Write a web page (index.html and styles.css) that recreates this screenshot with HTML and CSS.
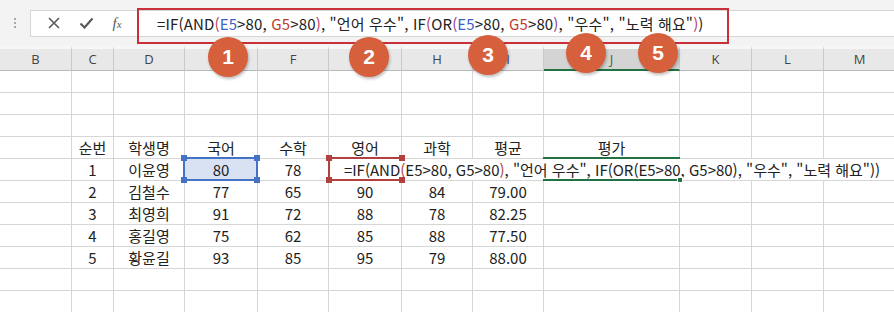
FILE: index.html
```html
<!DOCTYPE html>
<html lang="ko">

<head>
    <meta charset="UTF-8">
    <meta name="viewport" content="width=device-width, initial-scale=1.0">
    <title>IF AND OR 수식</title>
    <link rel="stylesheet" href="styles.css">
</head>

<body>
    <div class="page">
        <!-- 수식 입력줄 -->
        <div class="toolbar">
            <div class="grip"><i></i><i></i><i></i></div>
            <div class="fbar">
                <div class="fbtns">
                    <svg width="12" height="12" viewBox="0 0 12 12"><path d="M1 1L11 11M11 1L1 11" stroke="#5a5a5a" stroke-width="1.6" fill="none"/></svg>
                    <svg width="15" height="12" viewBox="0 0 15 12"><path d="M1.5 6.5L5.5 10.5L13.5 1.5" stroke="#5a5a5a" stroke-width="2.2" fill="none"/></svg>
                    <span class="fx">f<small>x</small></span>
                </div>
                <div class="finput">=IF(AND<span class="p1">(</span><span class="rb">E5</span>&gt;80, <span class="rr">G5</span>&gt;80<span class="p1">)</span>, "언어 우수", IF<span class="p1">(</span>OR<span class="p2">(</span><span class="rb">E5</span>&gt;80, <span class="rr">G5</span>&gt;80<span class="p2">)</span>, "우수", "노력 해요"<span class="p1">)</span>)</div>
            </div>
        </div>

        <!-- 시트 -->
        <div class="sheet">
            <div class="ch">B</div><div class="ch">C</div><div class="ch">D</div><div class="ch">E</div>
            <div class="ch">F</div><div class="ch">G</div><div class="ch">H</div><div class="ch">I</div>
            <div class="ch sel">J</div><div class="ch">K</div><div class="ch">L</div><div class="ch">M</div>
        </div>

        <!-- 표시 -->
        <div class="mark"></div>
        <div class="ref blue"><i class="tl"></i><i class="tr"></i><i class="bl"></i><i class="br"></i></div>
        <div class="ref red"><i class="tl"></i><i class="tr"></i><i class="bl"></i><i class="br"></i></div>
        <div class="active"><i class="br"></i></div>
        <div class="badge b1">1</div>
        <div class="badge b2">2</div>
        <div class="badge b3">3</div>
        <div class="badge b4">4</div>
        <div class="badge b5">5</div>
    </div>
    <script>
        // 표 데이터
        let rows = [
            [], [], [],
            ['', '순번', '학생명', '국어', '수학', '영어', '과학', '평균', '평가', '', '', ''],
            ['', '1', '이윤영', '80', '78'],
            ['', '2', '김철수', '77', '65', '90', '84', '79.00', '', '', '', ''],
            ['', '3', '최영희', '91', '72', '88', '78', '82.25', '', '', '', ''],
            ['', '4', '홍길영', '75', '62', '85', '88', '77.50', '', '', '', ''],
            ['', '5', '황윤길', '93', '85', '95', '79', '88.00', '', '', '', ''],
            [], []
        ];
        let formula = '=IF(AND<span class="c1">(</span>E5&gt;80, G5&gt;80<span class="c1">)</span>, "언어 우수", IF(OR(E5&gt;80, G5&gt;80), "우수", "노력 해요"))';
        function render() {
            let sheet = document.querySelector(".sheet");
            rows.forEach((row, r) => {
                for (let c = 0; c < 12; c++) {
                    let cell = document.createElement("div");
                    cell.className = "cell";
                    if (r === 4 && c === 3) cell.classList.add("hl");
                    if (r === 4 && c === 5) {
                        cell.classList.add("wide");
                        cell.innerHTML = formula;
                        sheet.appendChild(cell);
                        break;
                    }
                    cell.textContent = row[c] || "";
                    sheet.appendChild(cell);
                }
            });
        }
        render();
    </script>
</body>

</html>
```

FILE: styles.css
```css
* {
    margin: 0;
    padding: 0;
    box-sizing: border-box;
}

body {
    width: 894px;
    height: 312px;
    overflow: hidden;
    background: #fff;
    font-family: "Noto Sans CJK KR", sans-serif;
    color: #222;
}

.page {
    position: relative;
    width: 894px;
    height: 312px;
    overflow: hidden;
}

.toolbar {
    height: 46px;
    background: #f3f3f3;
    display: flex;
    align-items: center;
}

.grip {
    width: 30px;
    display: flex;
    flex-direction: column;
    align-items: center;
    gap: 2px;
}

.grip i {
    width: 2px;
    height: 2px;
    background: #a8a8a8;
}

.fbar {
    flex: 1;
    height: 27px;
    display: flex;
    background: #fff;
    border: 1px solid #d6d6d6;
    border-right: none;
}

.fbtns {
    width: 106px;
    display: flex;
    align-items: center;
    justify-content: space-around;
    padding: 0 6px 0 8px;
}

.fx {
    font-family: "Liberation Serif", serif;
    font-style: italic;
    font-size: 15px;
    color: #5a5a5a;
    line-height: 1;
}

.fx small {
    font-size: 11px;
}

.finput {
    flex: 1;
    padding-left: 20px;
    font-size: 15px;
    letter-spacing: 0.15px;
    line-height: 25px;
    white-space: nowrap;
}

.rb {
    color: #3b5fc7;
}

.rr {
    color: #c0392f;
}

.p1 {
    color: #b3406a;
}

.p2 {
    color: #8a3fa0;
}

.c1 {
    color: #b04545;
}

.sheet {
    display: grid;
    grid-template-columns: 72px 42px 71px 73px 71px 73px 71px 71px 136px 72px 72px 72px;
    grid-template-rows: 25px;
    grid-auto-rows: 22px;
}

.ch {
    background: #e8e8e8;
    border-right: 1px solid #c9c9c9;
    border-bottom: 1px solid #b9b9b9;
    border-top: 3px solid #f7f7f7;
    text-align: center;
    font-family: "Open Sans", sans-serif;
    font-size: 13px;
    line-height: 21px;
    color: #444;
}

.ch.sel {
    background: #d4d4d4;
    color: #217346;
    border-bottom: 2px solid #217346;
}

.cell {
    border-right: 1px solid #d6d6d6;
    border-bottom: 1px solid #d6d6d6;
    text-align: center;
    font-size: 15px;
    line-height: 21px;
    white-space: nowrap;
}

.cell.hl {
    background: #d9e2f3;
}

.cell.wide {
    grid-column: span 7;
    overflow: visible;
}

/* 수식 강조 상자 */
.mark {
    position: absolute;
    left: 137px;
    top: 8px;
    width: 592px;
    height: 36px;
    border: 2px solid #c9303a;
}

.ref {
    position: absolute;
    top: 157px;
    height: 24px;
    border: 2px solid;
}

.ref.blue {
    left: 183px;
    width: 75px;
    border-color: #4472c4;
}

.ref.red {
    left: 328px;
    width: 74px;
    border-color: #b1403f;
    border-right: none;
}

.ref i,
.active i {
    position: absolute;
    width: 6px;
    height: 6px;
}

.ref.blue i {
    background: #4472c4;
}

.ref.red i {
    background: #b1403f;
}

.ref .tl {
    left: -4px;
    top: -4px;
}

.ref .tr {
    right: -4px;
    top: -4px;
}

.ref.red .tr,
.ref.red .br {
    right: -3px;
}

.ref .bl {
    left: -4px;
    bottom: -4px;
}

.ref .br {
    right: -4px;
    bottom: -4px;
}

.active {
    position: absolute;
    left: 543px;
    top: 157px;
    width: 137px;
    height: 24px;
    border-top: 2px solid #217346;
    border-bottom: 2px solid #217346;
}

.active .br {
    right: -3px;
    bottom: -4px;
    background: #217346;
    border: 1px solid #fff;
}

.badge {
    position: absolute;
    width: 40px;
    height: 40px;
    border-radius: 50%;
    background: #d65f3c;
    box-shadow: 1px 2px 3px rgba(0, 0, 0, 0.25);
    color: #fff;
    font-family: "Liberation Sans", sans-serif;
    font-weight: bold;
    font-size: 21px;
    line-height: 40px;
    text-align: center;
}

.b1 {
    left: 208px;
    top: 37px;
}

.b2 {
    left: 349px;
    top: 37px;
}

.b3 {
    left: 468px;
    top: 35px;
}

.b4 {
    left: 566px;
    top: 33px;
}

.b5 {
    left: 638px;
    top: 33px;
}
```
